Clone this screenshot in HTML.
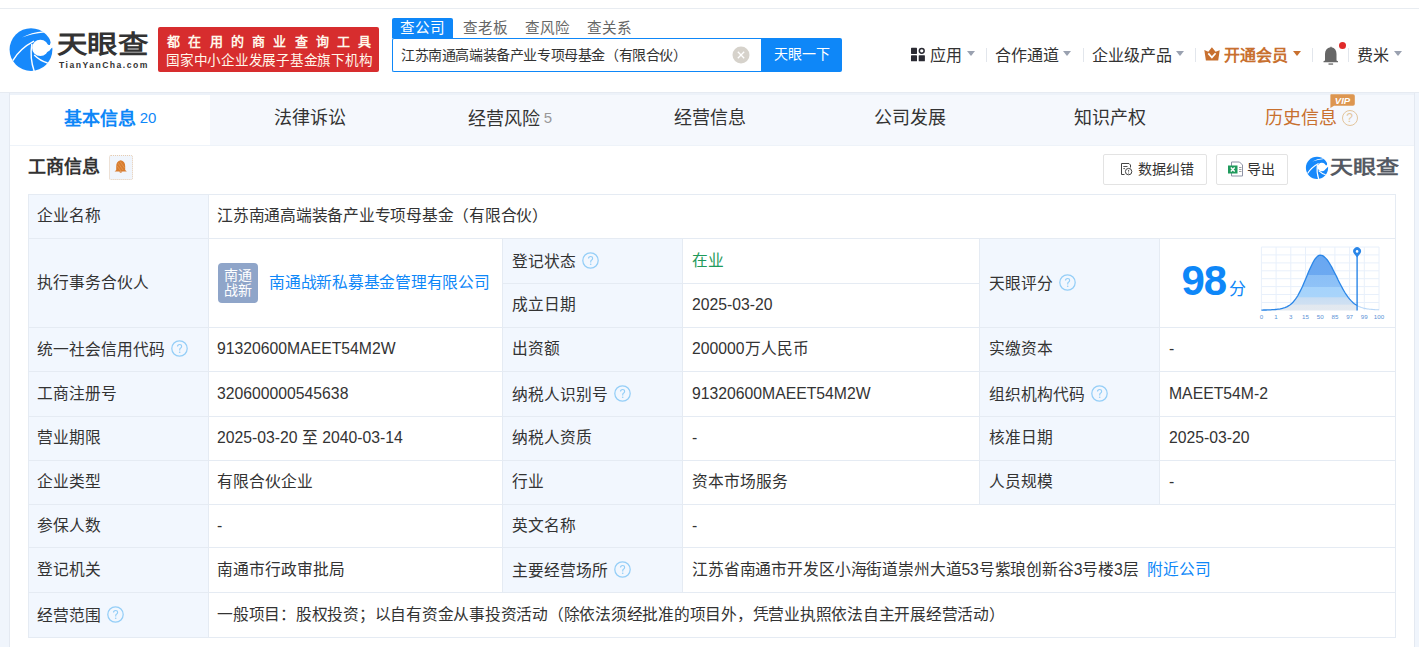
<!DOCTYPE html>
<html lang="zh-CN"><head><meta charset="utf-8">
<style>
*{box-sizing:border-box;margin:0;padding:0}
html,body{width:1419px;height:647px;overflow:hidden}
body{position:relative;background:#f0f5fc;font-family:"Liberation Sans",sans-serif;color:#333}
.abs{position:absolute}
#hdr{position:absolute;left:0;top:0;width:1419px;height:92px;background:#fff}
#topline{position:absolute;left:0;top:8px;width:1419px;height:1px;background:#e8ecf1}
#hline{position:absolute;left:0;top:92px;width:1419px;height:1px;background:#e6ebf2}
.nw{white-space:nowrap;line-height:1}
#banner{left:158px;top:27px;width:221px;height:45px;background:#d72d2e;border-radius:2px}
#banner .l1{position:absolute;left:9px;top:8px;font-size:13px;font-weight:bold;color:#fff7ea;letter-spacing:8.25px;line-height:1;white-space:nowrap}
#banner .l2{position:absolute;left:8px;top:26.5px;font-size:13.6px;color:#fff7ea;line-height:1;letter-spacing:-0.25px;white-space:nowrap}
.stab{position:absolute;top:18px;height:20px;width:62px;font-size:14.6px;line-height:21px;text-align:center;color:#666}
.stab.on{background:#0e87f8;color:#fff;border-radius:2px 2px 0 0;width:61px}
#sbox{left:392px;top:38px;width:370px;height:34px;border:1px solid #0e87f8;border-right:none;border-radius:2px 0 0 2px;background:#fff}
#sbtn{left:761px;top:38px;width:81px;height:34px;background:#0e87f8;border-radius:0 2px 2px 0;color:#fff;font-size:14px;line-height:32px;text-align:center}
.nav{position:absolute;top:47.5px;font-size:16px;line-height:16px;color:#333;white-space:nowrap}
.tri{position:absolute;width:0;height:0;border-left:4px solid transparent;border-right:4px solid transparent;border-top:5px solid #9aa1b0}
.sep{position:absolute;top:48px;width:1px;height:14px;background:#e2e6ec}
#card{left:9px;top:93px;width:1406px;height:560px;background:#fff;border-left:1px solid #e4e9f1;border-right:1px solid #e4e9f1}
#tabs{position:absolute;left:0;top:2px;width:1404px;height:51px;background:#f5f8fd;border-bottom:1px solid #eef3f9}
#cstrip{position:absolute;left:0;top:0;width:1404px;height:2px;background:#edf2f9}
.tab{position:absolute;top:0;width:200px;height:50px;text-align:center;font-size:18px;line-height:46px;color:#333;white-space:nowrap}
.tab.on{background:#fff;color:#0e87f8;font-weight:bold;height:50px}
.tab sup{font-size:15px;vertical-align:2px;font-weight:normal;margin-left:4px;color:#999}
.tab.on sup{color:#0e87f8}
table{position:absolute;left:18px;top:101px;border-collapse:collapse;table-layout:fixed}
td{border:1px solid #e5ebf3;font-size:15.75px;padding:0 0 1px 8px;white-space:nowrap;vertical-align:middle;line-height:16px}
td.lb{background:#f2f7fe}
.cj{letter-spacing:-0.25px}
td.p9{padding-left:9px}
.qi{display:inline-block;vertical-align:-2px;margin-left:5.5px}
.q{display:inline-block;width:15px;height:15px;border:1px solid #a9d3f5;border-radius:50%;color:#a9d3f5;font-size:11px;line-height:13px;text-align:center;vertical-align:-1px;margin-left:6px}
a{color:#0e87f8;text-decoration:none}
</style></head>
<body>
<div id="hdr">
  <div id="topline"></div>
  <!-- logo -->
  <svg class="abs" style="left:6px;top:25px" width="50" height="50" viewBox="6 25 50 50">
    <circle cx="31" cy="49.6" r="21.4" fill="#1789fb"/>
    <path d="M22 37.6 Q31 32 44 31.2 L44.5 32.6 Q32 33.6 22 37.6Z" fill="#fff"/>
    <path d="M44 31.5 Q50.5 35 50.6 42.5 Q50.5 45.5 47.8 46.6 L53 46.6 L53 28 Z" fill="#fff"/>
    <circle cx="40.3" cy="47.9" r="8.2" fill="#fff"/>
    <path d="M46 44.5 L53 45.5 L53 47.6 L51.6 47.9 Q50 51 46.5 52 Z" fill="#fff"/>
    <path d="M12.8 60.6 Q20 48.5 34 41.2" stroke="#fff" stroke-width="1.4" fill="none"/>
    <path d="M31.8 44 Q29.6 58 34.2 71.2" stroke="#fff" stroke-width="1.4" fill="none"/>
    <path d="M34.2 55 Q40 60.8 47.6 63" stroke="#fff" stroke-width="1.4" fill="none"/>
  </svg>
  <div class="abs nw" style="left:57px;top:28px;font-size:29px;font-weight:bold;color:#333;letter-spacing:0px;transform-origin:0 100%;transform:scale(1.05,0.88)">天眼查</div>
  <div class="abs nw" style="left:59px;top:61px;font-size:8.6px;font-weight:bold;color:#333;letter-spacing:1.48px">TianYanCha.com</div>
  <div id="banner" class="abs">
    <div class="l1">都在用的商业查询工具</div>
    <div class="l2">国家中小企业发展子基金旗下机构</div>
  </div>
  <div class="stab on" style="left:392px">查公司</div>
  <div class="stab" style="left:454px">查老板</div>
  <div class="stab" style="left:516px">查风险</div>
  <div class="stab" style="left:578px">查关系</div>
  <div id="sbox" class="abs"><div class="abs nw" style="left:8px;top:9px;font-size:14px;letter-spacing:-0.4px;color:#333">江苏南通高端装备产业专项母基金（有限合伙）</div>
    <svg class="abs" style="left:338.5px;top:6.5px" width="18" height="18" viewBox="0 0 18 18"><circle cx="9" cy="9" r="8.5" fill="#d6d2cb"/><path d="M5.8 5.8L12.2 12.2M12.2 5.8L5.8 12.2" stroke="#fff" stroke-width="1.3"/></svg>
  </div>
  <div id="sbtn" class="abs">天眼一下</div>
  <!-- nav -->
  <svg class="abs" style="left:910px;top:47px" width="16" height="16" viewBox="910 47 16 16"><rect x="911" y="47.8" width="6" height="6.1" rx="0.6" fill="#2b2b33"/><circle cx="921.75" cy="50.85" r="2.4" fill="none" stroke="#2b2b33" stroke-width="1.5"/><rect x="911" y="55.2" width="6" height="6.1" rx="0.6" fill="#2b2b33"/><rect x="918.7" y="55.2" width="6.2" height="6.1" rx="0.6" fill="#2b2b33"/></svg>
  <div class="nav" style="left:930px">应用</div>
  <div class="tri" style="left:967px;top:51px"></div>
  <div class="sep" style="left:986px"></div>
  <div class="nav" style="left:995px">合作通道</div>
  <div class="tri" style="left:1063px;top:51px"></div>
  <div class="sep" style="left:1083px"></div>
  <div class="nav" style="left:1092px">企业级产品</div>
  <div class="tri" style="left:1176px;top:51px"></div>
  <div class="sep" style="left:1195px"></div>
  <svg class="abs" style="left:1203px;top:46px" width="18" height="16" viewBox="1203 46 18 16"><path d="M1204.3 50 L1208.3 51.8 L1211.9 47.2 L1215.6 51.8 L1219.7 50.2 L1218.2 60.6 L1205.9 60.6 Z" fill="#c8702f"/><path d="M1208.3 53.4 L1211.9 57.4 L1215.6 53.2" fill="none" stroke="#fff" stroke-width="1.7" stroke-linejoin="miter"/></svg>
  <div class="nav" style="left:1224px;color:#c8702f;font-weight:bold">开通会员</div>
  <div class="tri" style="left:1293px;top:51px;border-top-color:#c8702f"></div>
  <div class="sep" style="left:1312px"></div>
  <svg class="abs" style="left:1321px;top:40px" width="28" height="26" viewBox="1321 40 28 26"><path d="M1330.5 47.3 Q1330.5 46.5 1331 46.5 Q1331.5 46.5 1331.5 47.3 Q1336.5 48.5 1336.5 54 L1336.5 60.6 L1338 61.2 L1338 62.3 L1323.5 62.3 L1323.5 61.2 L1325 60.6 L1325 54 Q1325 48.5 1330.5 47.3Z" fill="#676767"/><rect x="1328.5" y="63.4" width="4.6" height="1.3" fill="#676767"/><circle cx="1342.5" cy="45.4" r="3.5" fill="#e02a2a"/></svg>
  <div class="sep" style="left:1348px"></div>
  <div class="nav" style="left:1357px">费米</div>
  <div class="tri" style="left:1394px;top:51px"></div>
</div>
<div id="hline"></div>
<div id="card" class="abs">
  <div id="cstrip"></div>
  <div id="tabs">
    <div class="tab on" style="left:0">基本信息<sup>20</sup></div>
    <div class="tab" style="left:200px">法律诉讼</div>
    <div class="tab" style="left:400px">经营风险<sup>5</sup></div>
    <div class="tab" style="left:600px">经营信息</div>
    <div class="tab" style="left:800px">公司发展</div>
    <div class="tab" style="left:1000px">知识产权</div>
    <div class="tab" style="left:1200px;color:#c8702f;padding-left:2px">历史信息<span class="q" style="width:16px;height:16px;border-color:#e3c59c;color:#e3c59c;margin-left:5px;vertical-align:2px;font-size:12px;line-height:14px">?</span></div>
    <svg class="abs" style="left:1319px;top:-2px" width="28" height="16" viewBox="1329 93 28 16"><path d="M1331 94.2 L1353 94.2 Q1354.8 94.2 1354.8 96 L1354.8 104 Q1354.8 105.8 1353 105.8 L1334 105.8 L1330.4 108 L1330.4 95 Q1330.4 94.2 1331 94.2Z" fill="#dd9650"/><text x="1342.5" y="104.2" font-family="Liberation Sans" font-size="9.5" font-weight="bold" font-style="italic" fill="#fff" text-anchor="middle">VIP</text></svg>
  </div>
  <div class="abs nw" style="left:17.5px;top:65px;font-size:18px;font-weight:bold;color:#333">工商信息</div>
  <div class="abs" style="left:99px;top:62px;width:24px;height:25px;border:1px dotted #e9cdb0;border-radius:2px;background:#f0f5fc"></div>
  <svg class="abs" style="left:102px;top:65px" width="16" height="17" viewBox="0 0 16 17"><path d="M8.7 2.2 Q13.2 3 13.2 8.5 L13.2 12 L14.8 13.6 L2.6 13.6 L4.2 12 L4.2 8.5 Q4.2 3 8.7 2.2Z" fill="#d87d30"/><path d="M6 5 L11 12 M5 8 L9 13 M8 3.5 L12.5 10" stroke="#e9a460" stroke-width="0.6"/><path d="M7 13.6 Q8.7 16 10.4 13.6Z" fill="#d87d30"/></svg>
  <div class="abs" style="left:1093px;top:61px;width:104px;height:31px;border:1px solid #e3e3e3;border-radius:2px"></div>
  <svg class="abs" style="left:1108px;top:67px" width="18" height="18" viewBox="1118 160 18 18"><path d="M1121.5 163.5 L1129 163.5 L1130.5 165 L1130.5 167.5 M1121.5 163.5 L1121.5 174.5 L1124.5 174.5" fill="none" stroke="#444" stroke-width="1"/><path d="M1123.3 166.5 H1127.5 M1123.3 168.6 H1125" stroke="#555" stroke-width="1"/><circle cx="1128.6" cy="171.6" r="3.2" fill="#fff" stroke="#444" stroke-width="1"/><path d="M1128.6 169.9 V171.6" stroke="#444" stroke-width="0.9"/><circle cx="1128.6" cy="173" r="0.55" fill="#444"/></svg>
  <div class="abs nw" style="left:1128px;top:68.5px;font-size:14px;color:#333">数据纠错</div>
  <div class="abs" style="left:1206px;top:61px;width:72px;height:31px;border:1px solid #e3e3e3;border-radius:2px"></div>
  <svg class="abs" style="left:1217px;top:67px" width="18" height="17" viewBox="0 0 18 17"><path d="M4.5 2 L12.5 2 L15.5 5 L15.5 16 L4.5 16 Z" fill="#fff" stroke="#8e93a6" stroke-width="1"/><rect x="1" y="5.5" width="9.5" height="8" fill="#1f9a5c"/><path d="M3.8 7.5 L7.7 11.5 M7.7 7.5 L3.8 11.5" stroke="#fff" stroke-width="1.4"/><path d="M12 7.5 H14.5 M12 9.5 H14.5 M12 11.5 H14.5" stroke="#888" stroke-width="0.8"/></svg>
  <div class="abs nw" style="left:1236.5px;top:68.5px;font-size:14px;color:#333">导出</div>
  <svg class="abs" style="left:1294px;top:61.6px" width="26" height="26" viewBox="6 25 50 50"><circle cx="31" cy="49.6" r="21.4" fill="#1789fb"/><path d="M22 37.6 Q31 32 44 31.2 L44.5 32.6 Q32 33.6 22 37.6Z" fill="#fff"/><path d="M44 31.5 Q50.5 35 50.6 42.5 Q50.5 45.5 47.8 46.6 L53 46.6 L53 28 Z" fill="#fff"/><circle cx="40.3" cy="47.9" r="8.2" fill="#fff"/><path d="M46 44.5 L53 45.5 L53 47.6 L51.6 47.9 Q50 51 46.5 52 Z" fill="#fff"/><path d="M12.8 60.6 Q20 48.5 34 41.2" stroke="#fff" stroke-width="2.2" fill="none"/><path d="M31.8 44 Q29.6 58 34.2 71.2" stroke="#fff" stroke-width="2.2" fill="none"/><path d="M34.2 55 Q40 60.8 47.6 63" stroke="#fff" stroke-width="2.2" fill="none"/></svg>
  <div class="abs nw" style="left:1320px;top:64px;font-size:20px;font-weight:600;color:#555a63;transform-origin:0 100%;transform:scale(1.15,0.95)">天眼查</div>
  <table>
    <colgroup><col style="width:180px"><col style="width:294px"><col style="width:180px"><col style="width:297px"><col style="width:180px"><col style="width:236px"></colgroup>
    <tr style="height:44px"><td class="lb">企业名称</td><td colspan="5" class="cj">江苏南通高端装备产业专项母基金（有限合伙）</td></tr>
    <tr style="height:45px"><td class="lb" rowspan="2">执行事务合伙人</td><td rowspan="2" style="position:relative"><div class="abs" style="left:9px;top:24px;width:40px;height:40px;border-radius:4px;background:#8fa5c9;color:#fff;font-size:14px;line-height:15px;padding-top:5px;text-align:center;white-space:normal">南通<br>战新</div><a class="cj" style="margin-left:52px">南通战新私募基金管理有限公司</a></td><td class="p9 lb">登记状态<svg class="qi" width="17" height="17" viewBox="0 0 17 17"><circle cx="8.5" cy="8.5" r="7.7" fill="none" stroke="#94cef7" stroke-width="1.25"/><path d="M6.5 6.6 Q6.5 4.5 8.6 4.5 Q10.6 4.5 10.6 6.4 Q10.6 7.6 9.4 8.3 Q8.7 8.8 8.7 9.9 L8.7 10.5" fill="none" stroke="#94cef7" stroke-width="1.15"/><circle cx="8.7" cy="12.3" r="0.8" fill="#94cef7"/></svg></td><td class="p9" style="color:#1f9a5b">在业</td><td class="p9 lb" rowspan="2">天眼评分<svg class="qi" width="17" height="17" viewBox="0 0 17 17"><circle cx="8.5" cy="8.5" r="7.7" fill="none" stroke="#94cef7" stroke-width="1.25"/><path d="M6.5 6.6 Q6.5 4.5 8.6 4.5 Q10.6 4.5 10.6 6.4 Q10.6 7.6 9.4 8.3 Q8.7 8.8 8.7 9.9 L8.7 10.5" fill="none" stroke="#94cef7" stroke-width="1.15"/><circle cx="8.7" cy="12.3" r="0.8" fill="#94cef7"/></svg></td><td class="p9" rowspan="2"></td></tr>
    <tr style="height:44px"><td class="p9 lb">成立日期</td><td class="p9">2025-03-20</td></tr>
    <tr style="height:44px"><td class="lb">统一社会信用代码<svg class="qi" width="17" height="17" viewBox="0 0 17 17"><circle cx="8.5" cy="8.5" r="7.7" fill="none" stroke="#94cef7" stroke-width="1.25"/><path d="M6.5 6.6 Q6.5 4.5 8.6 4.5 Q10.6 4.5 10.6 6.4 Q10.6 7.6 9.4 8.3 Q8.7 8.8 8.7 9.9 L8.7 10.5" fill="none" stroke="#94cef7" stroke-width="1.15"/><circle cx="8.7" cy="12.3" r="0.8" fill="#94cef7"/></svg></td><td>91320600MAEET54M2W</td><td class="p9 lb">出资额</td><td class="p9">200000万人民币</td><td class="p9 lb">实缴资本</td><td class="p9">-</td></tr>
    <tr style="height:45px"><td class="lb">工商注册号</td><td>320600000545638</td><td class="p9 lb">纳税人识别号<svg class="qi" width="17" height="17" viewBox="0 0 17 17"><circle cx="8.5" cy="8.5" r="7.7" fill="none" stroke="#94cef7" stroke-width="1.25"/><path d="M6.5 6.6 Q6.5 4.5 8.6 4.5 Q10.6 4.5 10.6 6.4 Q10.6 7.6 9.4 8.3 Q8.7 8.8 8.7 9.9 L8.7 10.5" fill="none" stroke="#94cef7" stroke-width="1.15"/><circle cx="8.7" cy="12.3" r="0.8" fill="#94cef7"/></svg></td><td class="p9">91320600MAEET54M2W</td><td class="p9 lb">组织机构代码<svg class="qi" width="17" height="17" viewBox="0 0 17 17"><circle cx="8.5" cy="8.5" r="7.7" fill="none" stroke="#94cef7" stroke-width="1.25"/><path d="M6.5 6.6 Q6.5 4.5 8.6 4.5 Q10.6 4.5 10.6 6.4 Q10.6 7.6 9.4 8.3 Q8.7 8.8 8.7 9.9 L8.7 10.5" fill="none" stroke="#94cef7" stroke-width="1.15"/><circle cx="8.7" cy="12.3" r="0.8" fill="#94cef7"/></svg></td><td class="p9">MAEET54M-2</td></tr>
    <tr style="height:44px"><td class="lb">营业期限</td><td>2025-03-20 至 2040-03-14</td><td class="p9 lb">纳税人资质</td><td class="p9">-</td><td class="p9 lb">核准日期</td><td class="p9">2025-03-20</td></tr>
    <tr style="height:44px"><td class="lb">企业类型</td><td>有限合伙企业</td><td class="p9 lb">行业</td><td class="p9">资本市场服务</td><td class="p9 lb">人员规模</td><td class="p9">-</td></tr>
    <tr style="height:43px"><td class="lb">参保人数</td><td>-</td><td class="p9 lb">英文名称</td><td class="p9" colspan="3">-</td></tr>
    <tr style="height:45px"><td class="lb">登记机关</td><td>南通市行政审批局</td><td class="p9 lb">主要经营场所<svg class="qi" width="17" height="17" viewBox="0 0 17 17"><circle cx="8.5" cy="8.5" r="7.7" fill="none" stroke="#94cef7" stroke-width="1.25"/><path d="M6.5 6.6 Q6.5 4.5 8.6 4.5 Q10.6 4.5 10.6 6.4 Q10.6 7.6 9.4 8.3 Q8.7 8.8 8.7 9.9 L8.7 10.5" fill="none" stroke="#94cef7" stroke-width="1.15"/><circle cx="8.7" cy="12.3" r="0.8" fill="#94cef7"/></svg></td><td class="p9" colspan="3" style="letter-spacing:-0.15px">江苏省南通市开发区小海街道崇州大道53号紫琅创新谷3号楼3层 <a style="margin-left:4.5px;letter-spacing:0">附近公司</a></td></tr>
    <tr style="height:45px"><td class="lb">经营范围<svg class="qi" width="17" height="17" viewBox="0 0 17 17"><circle cx="8.5" cy="8.5" r="7.7" fill="none" stroke="#94cef7" stroke-width="1.25"/><path d="M6.5 6.6 Q6.5 4.5 8.6 4.5 Q10.6 4.5 10.6 6.4 Q10.6 7.6 9.4 8.3 Q8.7 8.8 8.7 9.9 L8.7 10.5" fill="none" stroke="#94cef7" stroke-width="1.15"/><circle cx="8.7" cy="12.3" r="0.8" fill="#94cef7"/></svg></td><td colspan="5" class="cj">一般项目：股权投资；以自有资金从事投资活动（除依法须经批准的项目外，凭营业执照依法自主开展经营活动）</td></tr>
  </table>
  <div class="abs nw" style="left:1171.5px;top:167px;font-size:42px;font-weight:bold;color:#0e87f8;letter-spacing:-1px">98</div>
  <div class="abs nw" style="left:1219px;top:187.5px;font-size:17px;color:#0e87f8">分</div>
<svg class="abs" style="left:1245px;top:147px" width="140" height="80" viewBox="1255 240 140 80">
    <defs><linearGradient id="bg" x1="0" y1="255" x2="0" y2="310.4" gradientUnits="userSpaceOnUse"><stop offset="0" stop-color="#69a7f1"/><stop offset="0.36" stop-color="#6ca9f1"/><stop offset="0.37" stop-color="#8bbff6"/><stop offset="0.57" stop-color="#8fc2f7"/><stop offset="0.58" stop-color="#a6d3fb"/><stop offset="0.76" stop-color="#a8d4fb"/><stop offset="0.77" stop-color="#c8ddf3"/><stop offset="0.89" stop-color="#cfe0f2"/><stop offset="0.9" stop-color="#e2e8ef"/><stop offset="1" stop-color="#e3e9f0"/></linearGradient></defs>
    <g stroke="#e8f0fb" stroke-width="1" fill="none"><line x1="1261.4" y1="247" x2="1261.4" y2="310.4"/><line x1="1276.1" y1="247" x2="1276.1" y2="310.4"/><line x1="1290.8" y1="247" x2="1290.8" y2="310.4"/><line x1="1305.5" y1="247" x2="1305.5" y2="310.4"/><line x1="1320.2" y1="247" x2="1320.2" y2="310.4"/><line x1="1334.9" y1="247" x2="1334.9" y2="310.4"/><line x1="1349.6" y1="247" x2="1349.6" y2="310.4"/><line x1="1364.3" y1="247" x2="1364.3" y2="310.4"/><line x1="1379.0" y1="247" x2="1379.0" y2="310.4"/><line x1="1261.4" y1="247.0" x2="1379" y2="247.0"/><line x1="1261.4" y1="254.9" x2="1379" y2="254.9"/><line x1="1261.4" y1="262.9" x2="1379" y2="262.9"/><line x1="1261.4" y1="270.8" x2="1379" y2="270.8"/><line x1="1261.4" y1="278.7" x2="1379" y2="278.7"/><line x1="1261.4" y1="286.6" x2="1379" y2="286.6"/><line x1="1261.4" y1="294.5" x2="1379" y2="294.5"/><line x1="1261.4" y1="302.5" x2="1379" y2="302.5"/></g>
    <path d="M1261.4 310.4 L1261.4 310.1 L1262.6 310.1 L1263.8 310.0 L1264.9 310.0 L1266.1 310.0 L1267.3 309.9 L1268.5 309.9 L1269.6 309.8 L1270.8 309.8 L1272.0 309.7 L1273.2 309.7 L1274.3 309.6 L1275.5 309.5 L1276.7 309.4 L1277.9 309.2 L1279.0 309.1 L1280.2 308.9 L1281.4 308.6 L1282.6 308.3 L1283.7 308.0 L1284.9 307.6 L1286.1 307.1 L1287.3 306.6 L1288.4 305.9 L1289.6 305.2 L1290.8 304.3 L1292.0 303.2 L1293.2 302.0 L1294.3 300.6 L1295.5 299.1 L1296.7 297.4 L1297.9 295.5 L1299.0 293.4 L1300.2 291.1 L1301.4 288.7 L1302.6 286.2 L1303.7 283.5 L1304.9 280.8 L1306.1 278.0 L1307.3 275.1 L1308.4 272.3 L1309.6 269.6 L1310.8 267.0 L1312.0 264.5 L1313.1 262.2 L1314.3 260.2 L1315.5 258.5 L1316.7 257.1 L1317.8 256.1 L1319.0 255.4 L1320.2 255.2 L1321.4 255.3 L1322.6 255.7 L1323.7 256.4 L1324.9 257.4 L1326.1 258.6 L1327.3 260.0 L1328.4 261.7 L1329.6 263.5 L1330.8 265.5 L1332.0 267.6 L1333.1 269.9 L1334.3 272.2 L1335.5 274.5 L1336.7 276.9 L1337.8 279.3 L1339.0 281.7 L1340.2 284.0 L1341.4 286.2 L1342.5 288.4 L1343.7 290.5 L1344.9 292.5 L1346.1 294.3 L1347.2 296.0 L1348.4 297.6 L1349.6 299.1 L1350.8 300.4 L1352.0 301.6 L1353.1 302.7 L1354.3 303.7 L1355.5 304.5 L1356.7 305.3 L1357.1 305.5 L1357.1 310.4 Z" fill="url(#bg)"/>
    <path d="M1261.4 310.1 L1262.6 310.1 L1263.8 310.0 L1264.9 310.0 L1266.1 310.0 L1267.3 309.9 L1268.5 309.9 L1269.6 309.8 L1270.8 309.8 L1272.0 309.7 L1273.2 309.7 L1274.3 309.6 L1275.5 309.5 L1276.7 309.4 L1277.9 309.2 L1279.0 309.1 L1280.2 308.9 L1281.4 308.6 L1282.6 308.3 L1283.7 308.0 L1284.9 307.6 L1286.1 307.1 L1287.3 306.6 L1288.4 305.9 L1289.6 305.2 L1290.8 304.3 L1292.0 303.2 L1293.2 302.0 L1294.3 300.6 L1295.5 299.1 L1296.7 297.4 L1297.9 295.5 L1299.0 293.4 L1300.2 291.1 L1301.4 288.7 L1302.6 286.2 L1303.7 283.5 L1304.9 280.8 L1306.1 278.0 L1307.3 275.1 L1308.4 272.3 L1309.6 269.6 L1310.8 267.0 L1312.0 264.5 L1313.1 262.2 L1314.3 260.2 L1315.5 258.5 L1316.7 257.1 L1317.8 256.1 L1319.0 255.4 L1320.2 255.2 L1321.4 255.3 L1322.6 255.7 L1323.7 256.4 L1324.9 257.4 L1326.1 258.6 L1327.3 260.0 L1328.4 261.7 L1329.6 263.5 L1330.8 265.5 L1332.0 267.6 L1333.1 269.9 L1334.3 272.2 L1335.5 274.5 L1336.7 276.9 L1337.8 279.3 L1339.0 281.7 L1340.2 284.0 L1341.4 286.2 L1342.5 288.4 L1343.7 290.5 L1344.9 292.5 L1346.1 294.3 L1347.2 296.0 L1348.4 297.6 L1349.6 299.1 L1350.8 300.4 L1352.0 301.6 L1353.1 302.7 L1354.3 303.7 L1355.5 304.5 L1356.7 305.3 L1357.1 305.5" fill="none" stroke="#2a86e8" stroke-width="1.3"/>
    <path d="M1357.1 305.5 L1357.8 305.9 L1359.0 306.5 L1360.2 307.0 L1361.4 307.5 L1362.5 307.8 L1363.7 308.2 L1364.9 308.4 L1366.1 308.7 L1367.2 308.9 L1368.4 309.0 L1369.6 309.2 L1370.8 309.3 L1371.9 309.4 L1373.1 309.5 L1374.3 309.6 L1375.5 309.7 L1376.6 309.7 L1377.8 309.8 L1379.0 309.8" fill="none" stroke="#b8d6f6" stroke-width="1.1"/>
    <line x1="1357.1" y1="254" x2="1357.1" y2="310.4" stroke="#2a86e8" stroke-width="1.4"/>
    <path d="M1357.1 257.5 L1353.8999999999999 253.4 A3.9 3.9 0 1 1 1360.3 253.4 Z" fill="#2a86e8"/>
    <circle cx="1357.1" cy="251.4" r="1.3" fill="#fff"/>
    <g font-family="Liberation Sans" font-size="6.2" fill="#5b92d6" text-anchor="middle"><text x="1261.4" y="319">0</text><text x="1276.1" y="319">1</text><text x="1290.8" y="319">3</text><text x="1305.5" y="319">15</text><text x="1320.2" y="319">50</text><text x="1334.9" y="319">85</text><text x="1349.6" y="319">97</text><text x="1364.3" y="319">99</text><text x="1379.0" y="319">100</text></g>
  </svg>

</div>
</body></html>
